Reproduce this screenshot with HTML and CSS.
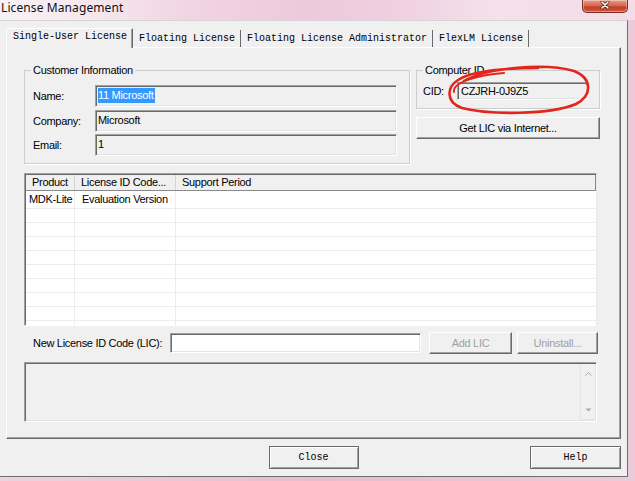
FILE: index.html
```html
<!DOCTYPE html>
<html>
<head>
<meta charset="utf-8">
<title>License Management</title>
<link rel="stylesheet" href="styles.css">
</head>
<body>
<div class="window">
  <div class="titlebar">
    <span class="title">License Management</span>
    <div class="close-btn">
      <svg width="12" height="9" viewBox="0 0 12 9"><path d="M3 1 L9 7 M9 1 L3 7" stroke="#5a1a10" stroke-width="3" stroke-linecap="round"/><path d="M3 1 L9 7 M9 1 L3 7" stroke="#fff" stroke-width="1.6" stroke-linecap="round"/></svg>
    </div>
  </div>
  <div class="client">
    <div class="tabs">
      <div class="tab active">Single-User License</div>
      <div class="tab">Floating License</div>
      <div class="tab">Floating License Administrator</div>
      <div class="tab">FlexLM License</div>
    </div>
    <div class="panel">
      <div class="top">
        <fieldset class="group customer">
          <legend>Customer Information</legend>
          <div class="form">
            <span class="lbl">Name:</span>
            <div class="field"><span class="sel">11 Microsoft</span></div>
            <span class="lbl">Company:</span>
            <div class="field">Microsoft</div>
            <span class="lbl">Email:</span>
            <div class="field">1</div>
          </div>
        </fieldset>
        <div class="right-col">
          <fieldset class="group computer">
            <legend>Computer ID</legend>
            <div class="cid-row">
              <span class="lbl">CID:</span>
              <div class="field cid">CZJRH-0J9Z5</div>
            </div>
            <svg class="mark" width="146" height="54" viewBox="0 0 146 54">
              <path d="M18 19 C 42 5, 100 1, 128 9 C 146 16, 147 33, 130 42 C 104 53, 44 53, 16 46 C -1 40, 1 25, 12 18 C 26 9, 60 6, 92 6" fill="none" stroke="#e3261c" stroke-width="2.6" stroke-linecap="round"/>
              <path d="M8 30 C 6 21, 30 13, 58 11" fill="none" stroke="#e3261c" stroke-width="2" stroke-linecap="round"/>
            </svg>
          </fieldset>
          <div class="btn wide">Get LIC via Internet...</div>
        </div>
      </div>

      <div class="listview">
        <div class="lv-head">
          <div class="hc">Product</div>
          <div class="hc">License ID Code...</div>
          <div class="hc">Support Period</div>
        </div>
        <div class="lv-body">
          <div class="lv-row first"><div class="c c1">MDK-Lite</div><div class="c c2">Evaluation Version</div><div class="c"></div></div>
          <div class="lv-row"><div class="c c1"></div><div class="c c2"></div><div class="c"></div></div>
          <div class="lv-row"><div class="c c1"></div><div class="c c2"></div><div class="c"></div></div>
          <div class="lv-row"><div class="c c1"></div><div class="c c2"></div><div class="c"></div></div>
          <div class="lv-row"><div class="c c1"></div><div class="c c2"></div><div class="c"></div></div>
          <div class="lv-row"><div class="c c1"></div><div class="c c2"></div><div class="c"></div></div>
          <div class="lv-row"><div class="c c1"></div><div class="c c2"></div><div class="c"></div></div>
          <div class="lv-row"><div class="c c1"></div><div class="c c2"></div><div class="c"></div></div>
          <div class="lv-row"><div class="c c1"></div><div class="c c2"></div><div class="c"></div></div>
          <div class="lv-row"><div class="c c1"></div><div class="c c2"></div><div class="c"></div></div>
        </div>
      </div>

      <div class="lic-row">
        <span class="lic-label">New License ID Code (LIC):</span>
        <div class="field white"></div>
        <div class="btn disabled add">Add LIC</div>
        <div class="btn disabled uninstall">Uninstall...</div>
      </div>

      <div class="log">
        <div class="log-text"></div>
        <div class="scroll">
          <svg width="7" height="4" viewBox="0 0 7 4"><path d="M0.5 3.5 L3.5 0.5 L6.5 3.5" fill="none" stroke="#a8a8a8" stroke-width="1"/></svg>
          <svg width="7" height="4" viewBox="0 0 7 4"><path d="M0.5 0.5 L6.5 0.5 L3.5 3.5 Z" fill="#a8a8a8"/></svg>
        </div>
      </div>
    </div>
    <div class="footer">
      <div class="btn dlg close">Close</div>
      <div class="btn dlg help">Help</div>
    </div>
  </div>
</div>
</body>
</html>
```
FILE: styles.css
```css
* { box-sizing: border-box; }
html, body { margin: 0; padding: 0; }
body {
  width: 635px;
  height: 481px;
  overflow: hidden;
  background: linear-gradient(90deg, #ecd2df 0%, #e6bcd2 50%, #ebcadb 100%);
  font-family: "Liberation Sans", Arial, sans-serif;
  font-size: 11px;
  letter-spacing: -0.3px;
  color: #000;
}
.window {
  width: 635px;
  height: 481px;
  display: flex;
  flex-direction: column;
}
.titlebar {
  height: 20px;
  display: flex;
  justify-content: space-between;
  align-items: flex-start;
  padding-left: 1px;
  padding-right: 7px;
  background: linear-gradient(90deg, #f7f2f5 0%, #f5e8ef 14%, #f1d4e3 30%, #eec8dc 48%, #f0cfe1 62%, #f4e1eb 78%, #f3dce8 100%);
}
.title {
  font-family: "Noto Sans", "Open Sans", sans-serif;
  font-size: 12px;
  letter-spacing: 0.1px;
  line-height: 14px;
  padding-top: 1px;
  color: #111;
}
.close-btn {
  width: 46px;
  height: 13px;
  background: linear-gradient(#e7a08d 0%, #d9664e 45%, #c43d25 60%, #cf5a3f 100%);
  border: 1px solid #7b2f22;
  border-top: none;
  border-radius: 0 0 5px 5px;
  display: flex;
  justify-content: center;
  align-items: flex-start;
  padding-top: 1px;
  box-shadow: inset 0 0 0 1px rgba(255,255,255,0.35);
}
.client {
  align-self: flex-start;
  width: 628px;
  height: 457px;
  background: #f0f0f0;
  border-top: 1px solid #d4d4d4;
  border-right: 1px solid #6e6e6e;
  border-bottom: 1px solid #6e6e6e;
  padding: 7px 6px 7px 6px;
  display: flex;
  flex-direction: column;
}

/* tabs */
.tabs {
  display: flex;
  align-items: flex-end;
  height: 20px;
  margin-bottom: -1px;
  position: relative;
  z-index: 1;
  font-family: "Liberation Mono", "DejaVu Sans Mono", monospace;
  font-size: 10px;
  letter-spacing: 0;
}
.tab {
  height: 17px;
  margin-bottom: 1px;
  line-height: 17px;
  padding: 0 5px 0 6px;
  border-right: 1px solid #6a6a6a;
  white-space: nowrap;
}
.tab.active {
  height: 20px;
  margin-bottom: 0;
  line-height: 16px;
  padding: 0 5px 0 6px;
  background: #f0f0f0;
  border-top: 1px solid #fff;
  border-left: 1px solid #fff;
  border-right: 1px solid #6a6a6a;
  box-shadow: inset -1px 0 #a0a0a0;
}

/* panel */
.panel {
  height: 392px;
  border: 1px solid;
  border-color: #fff #6a6a6a #6a6a6a #fff;
  box-shadow: inset -1px -1px #a0a0a0;
  padding: 16px 20px 0 17px;
  display: flex;
  flex-direction: column;
}
.top {
  display: flex;
  gap: 6px;
  height: 100px;
}
.group {
  margin: 0;
  padding: 0;
  min-width: 0;
  border: 1px solid #cdcdcd;
  box-shadow: 1px 1px 0 #fff;
}
.group legend {
  margin-left: 6px;
  padding: 0 2px;
  line-height: 13px;
  height: 13px;
}
.customer {
  width: 386px;
  height: 100px;
}
.form {
  margin: 8px 0 0 8px;
  display: grid;
  grid-template-columns: 62px 302px;
  grid-template-rows: 22px 22px 22px;
  row-gap: 2.5px;
  align-items: center;
}
.lbl { white-space: nowrap; }
.field {
  height: 22px;
  background: #f0f0f0;
  border-top: 1px solid #a0a0a0;
  border-left: 1px solid #a0a0a0;
  border-bottom: 1px solid #fff;
  border-right: 1px solid #fff;
  box-shadow: inset 1px 1px #696969, inset -1px -1px #e3e3e3;
  padding: 2px 2px 0 2px;
  line-height: 15px;
  white-space: nowrap;
  overflow: hidden;
}
.sel {
  display: inline-block;
  background: #3399ff;
  color: #fff;
  line-height: 15px;
  padding: 0 1px 0 0;
}
.right-col {
  width: 184px;
  display: flex;
  flex-direction: column;
}
.computer {
  position: relative;
  height: 45px;
}
.cid-row {
  margin: 5px 0 0 6px;
  display: flex;
  align-items: center;
}
.cid-row .lbl { width: 34px; }
.field.cid {
  width: 131px;
  height: 18px;
  line-height: 14px;
  padding-top: 1px;
  padding-left: 3px;
}
.mark {
  position: absolute;
  left: 29px;
  top: -15px;
  pointer-events: none;
}
.btn {
  background: #f0f0f0;
  border: 1px solid;
  border-color: #fff #696969 #696969 #fff;
  box-shadow: inset -1px -1px #a0a0a0;
  display: flex;
  align-items: center;
  justify-content: center;
  white-space: nowrap;
}
.btn.wide {
  margin-top: 8px;
  height: 22px;
}
.btn.disabled {
  color: #a0a0a0;
}

/* list view */
.listview {
  margin-top: 9px;
  width: 573px;
  height: 153px;
  background: #fff;
  border-top: 1px solid #a0a0a0;
  border-left: 1px solid #a0a0a0;
  border-bottom: 1px solid #fff;
  border-right: 1px solid #e8e8e8;
  box-shadow: inset 1px 1px #696969;
  padding: 1px 0 0 1px;
  overflow: hidden;
}
.lv-head {
  display: grid;
  grid-template-columns: 49px 101px 1fr;
  height: 16px;
  background: #f0f0f0;
  border-bottom: 1px solid #8a8a8a;
  border-right: 1px solid #8a8a8a;
}
.hc {
  padding-left: 6px;
  line-height: 15px;
  border-right: 1px solid #d5d5d5;
  white-space: nowrap;
}
.hc:last-child { border-right: none; }
.lv-row {
  display: grid;
  grid-template-columns: 49px 101px 1fr;
  height: 14px;
  border-bottom: 1px solid #ececec;
}
.lv-row.first { height: 18px; }
.c {
  line-height: 17px;
  white-space: nowrap;
}
.c1 { padding-left: 3px; border-right: 1px solid #ececec; }
.c2 { padding-left: 7px; border-right: 1px solid #ececec; }

/* LIC row */
.lic-row {
  margin-top: 6px;
  height: 22px;
  display: flex;
  align-items: center;
}
.lic-label {
  width: 146px;
  padding-left: 9px;
  white-space: nowrap;
}
.field.white {
  width: 251px;
  height: 20px;
  background: #fff;
}
.btn.add {
  margin-left: 8px;
  width: 83px;
  height: 22px;
}
.btn.uninstall {
  margin-left: 5px;
  width: 81px;
  height: 22px;
}

/* log */
.log {
  margin-top: 8px;
  width: 573px;
  height: 60px;
  background: #f0f0f0;
  border-top: 1px solid #a0a0a0;
  border-left: 1px solid #a0a0a0;
  border-bottom: 1px solid #fff;
  border-right: 1px solid #fff;
  box-shadow: inset 1px 1px #696969, inset -1px -1px #e3e3e3;
  display: flex;
  padding: 2px 1px 1px 2px;
}
.log-text { flex: 1; }
.scroll {
  width: 15px;
  border-left: 1px solid #e6e6e6;
  border-bottom: 1px solid #e6e6e6;
  display: flex;
  flex-direction: column;
  align-items: center;
  justify-content: space-between;
  padding: 7px 0 7px 0;
}

/* footer */
.footer {
  margin-top: 7px;
  height: 23px;
  display: grid;
  grid-template-columns: 1fr auto 1fr;
}
.btn.dlg {
  width: 90px;
  height: 23px;
  border: 1px solid #696969;
  box-shadow: inset 1px 1px #fff, inset -1px -1px #a0a0a0;
  font-family: "Liberation Mono", "DejaVu Sans Mono", monospace;
  font-size: 10px;
  letter-spacing: 0;
}
.btn.close { grid-column: 2; }
.btn.help { grid-column: 3; justify-self: end; width: 91px; }
```
